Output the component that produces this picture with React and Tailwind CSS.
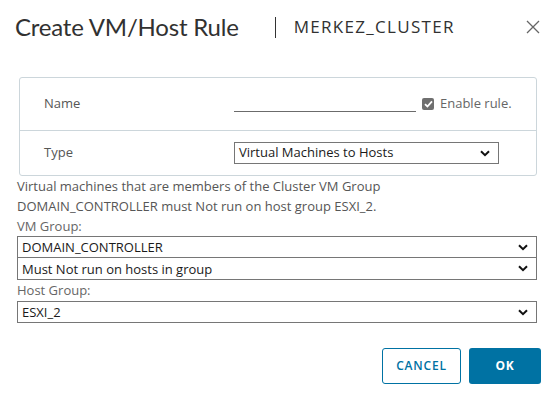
import React from "react";

function Chevron() {
  return (
    <svg width="10" height="7" viewBox="0 0 10 7" className="shrink-0">
      <path d="M1 1.2 L5 5.2 L9 1.2" fill="none" stroke="#111" strokeWidth="2" />
    </svg>
  );
}

function FakeSelect({ value, className = "" }) {
  return (
    <div
      className={`flex items-center justify-between h-[22px] border border-[#767676] bg-white pl-[4px] pr-[8px] text-[13px] text-[#1a1a1a] ${className}`}
    >
      <span>{value}</span>
      <Chevron />
    </div>
  );
}

export default function App() {
  return (
    <div className="w-[560px] h-[396px] bg-white font-['Open_Sans',sans-serif] text-[#313131]">
      {/* header */}
      <div className="flex items-center h-[54px] pl-[15px] pr-[20px]">
        <h1 className="font-['Lato',sans-serif] text-[24px] leading-[30px] text-[#313131] tracking-[-0.2px]">
          Create VM/Host Rule
        </h1>
        <div className="w-px h-[21px] bg-[#333] ml-[36px] mr-[18px]" />
        <span className="text-[17px] text-[#313131] tracking-[1.3px]">MERKEZ_CLUSTER</span>
        <button className="ml-auto w-[14px] h-[14px] flex items-center justify-center">
          <svg width="14" height="14" viewBox="0 0 14 14">
            <path d="M1 1 L13 13 M13 1 L1 13" stroke="#666" strokeWidth="1.3" />
          </svg>
        </button>
      </div>

      {/* rule box */}
      <div className="mt-[23px] ml-[19px] mr-[23px] border border-[#ccd6db] rounded-[3px]">
        <div className="flex items-center h-[53px] border-b border-[#ccd6db] pl-[24px]">
          <span className="w-[190px] text-[13px] text-[#565656]">Name</span>
          <div className="w-[182px] h-[13px] border-b border-[#6b6b6b] mt-[3px]" />
          <div className="flex items-center ml-[6px] gap-[6px]">
            <div className="w-[12px] h-[12px] rounded-[2px] bg-[#6f6f6f] flex items-center justify-center">
              <svg width="9" height="8" viewBox="0 0 9 8">
                <path d="M1 4.2 L3.4 6.5 L8 1.3" fill="none" stroke="#fff" strokeWidth="1.8" />
              </svg>
            </div>
            <span className="text-[13px] text-[#666]">Enable rule.</span>
          </div>
        </div>
        <div className="flex items-center h-[44px] pl-[24px]">
          <span className="w-[190px] text-[13px] text-[#565656]">Type</span>
          <FakeSelect value="Virtual Machines to Hosts" className="w-[265px]" />
        </div>
      </div>

      {/* description and groups */}
      <div className="pl-[17px] pr-[23px] text-[13px] leading-[20px]">
        <p className="text-[#565656]">Virtual machines that are members of the Cluster VM Group</p>
        <p className="text-[#565656]">DOMAIN_CONTROLLER must Not run on host group ESXI_2.</p>
        <p className="text-[#666]">VM Group:</p>
        <FakeSelect value="DOMAIN_CONTROLLER" />
        <FakeSelect value="Must Not run on hosts in group" className="-mt-px h-[23px]" />
        <p className="text-[#666]">Host Group:</p>
        <FakeSelect value="ESXI_2" className="mt-px" />
      </div>

      {/* footer */}
      <div className="flex justify-end gap-[8px] mt-[25px] pr-[19px]">
        <button className="w-[79px] h-[36px] rounded-[3px] border border-[#0072a3] text-[#0072a3] text-[12px] font-semibold tracking-[0.8px]">
          CANCEL
        </button>
        <button className="w-[72px] h-[36px] rounded-[3px] bg-[#0072a3] text-white text-[12px] font-bold tracking-[0.8px]">
          OK
        </button>
      </div>
    </div>
  );
}
